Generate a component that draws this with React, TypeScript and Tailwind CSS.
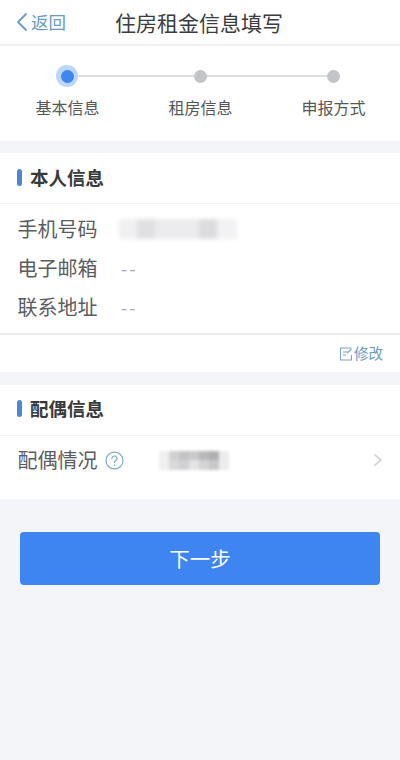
const font = { fontFamily: '"Noto Sans CJK SC", "Liberation Sans", sans-serif' };

function Bar() {
  return <span className="w-[5px] h-[17px] rounded-full bg-[#4f86d3]" />;
}

function Row({ label, value }: { label: string; value: string }) {
  return (
    <div className="h-[39px] pl-[17.5px] flex items-center">
      <span className="w-[103.5px] text-[20px] leading-none text-[#5a5c5f]">{label}</span>
      <span className="text-[18px] leading-none text-[#a6a8ac] tracking-[2px]">{value}</span>
    </div>
  );
}

export default function App() {
  return (
    <div style={font} className="w-[400px] h-[760px] bg-[#f3f5f9] flex flex-col overflow-hidden">
      <header className="h-[46px] shrink-0 bg-white border-b-2 border-[#f0f1f3] flex items-center pl-[15px]">
        <svg width="14" height="20" viewBox="0 0 14 20" fill="none" stroke="#6b9ac4" strokeWidth="1.8" strokeLinecap="round" strokeLinejoin="round">
          <path d="M11 2 L3 10 L11 18" />
        </svg>
        <span className="ml-[2px] w-[36px] text-[17.5px] leading-none text-[#6b9ac4]">返回</span>
        <span className="ml-[48px] text-[21px] leading-none text-[#3a3c3e]">住房租金信息填写</span>
      </header>

      <section className="h-[95px] shrink-0 bg-white flex flex-col">
        <div className="mt-[20px] ml-[56px] h-[20px] flex items-center">
          <span className="w-[22px] h-[22px] shrink-0 rounded-full bg-[#bcd6f8] flex items-center justify-center">
            <span className="w-[13px] h-[13px] rounded-full bg-[#3f86ee]" />
          </span>
          <span className="w-[115.5px] h-[2px] bg-[#dcdde0]" />
          <span className="w-[13px] h-[13px] shrink-0 rounded-full bg-[#c3c4c8]" />
          <span className="w-[120px] h-[2px] bg-[#dcdde0]" />
          <span className="w-[13px] h-[13px] shrink-0 rounded-full bg-[#c3c4c8]" />
        </div>
        <div className="mt-[13px] pl-[1px] grid grid-cols-[133px_133px_133px] text-center text-[16px] leading-none text-[#55575a]">
          <span>基本信息</span>
          <span>租房信息</span>
          <span>申报方式</span>
        </div>
      </section>

      <section className="mt-[12px] shrink-0 bg-white">
        <div className="h-[51px] pb-[1px] pl-[17px] flex items-center gap-[8px] border-b border-[#f1f2f4]">
          <Bar />
          <span className="text-[18.5px] font-bold text-[#38393b] leading-none">本人信息</span>
        </div>
        <div className="relative pt-[5px] h-[131px] border-b-2 border-[#ececee]">
          <Row label="手机号码" value="" />
          <Row label="电子邮箱" value="--" />
          <Row label="联系地址" value="--" />
          <div className="absolute left-[119px] top-[15px] w-[118px] h-[20px] flex blur-[2px]">
            <span className="w-[18px] bg-[#f0f0f2]" />
            <span className="w-[18px] bg-[#e0e0e2]" />
            <span className="w-[44px] bg-[#ececee]" />
            <span className="w-[18px] bg-[#dcdcde]" />
            <span className="w-[20px] bg-[#f2f2f4]" />
          </div>
        </div>
        <div className="h-[37px] flex items-center justify-end pr-[17px] gap-[1px]">
          <svg width="14" height="14" viewBox="0 0 14 14" fill="none" stroke="#7fa3c4" strokeWidth="1.1">
            <path d="M12.5 1 H1.5 V13 H12.5 V8" />
            <path d="M4 5 H9 M4 8 H7 M12.5 2 L8.5 6" />
          </svg>
          <span className="text-[14.5px] leading-none text-[#6b9ac4]">修改</span>
        </div>
      </section>

      <section className="mt-[13px] shrink-0 bg-white pb-[15px]">
        <div className="h-[51px] pb-[3px] pl-[17px] flex items-center gap-[8px] border-b border-[#f1f2f4]">
          <Bar />
          <span className="text-[18.5px] font-bold text-[#38393b] leading-none">配偶信息</span>
        </div>
        <div className="h-[48px] pl-[17.5px] pr-[17px] flex items-center">
          <span className="text-[20px] leading-none text-[#5a5c5f]">配偶情况</span>
          <svg className="ml-[7px]" width="19" height="19" viewBox="0 0 18 18" fill="none" stroke="#7fa8c8" strokeWidth="1.1" strokeLinecap="round">
            <circle cx="9" cy="9" r="8" />
            <path d="M6.6 7.2 A2.4 2.4 0 1 1 9.8 9.4 C9.1 9.7 9 10.2 9 11" />
            <path d="M9 13.2 V13.4" />
          </svg>
          <div className="ml-[35.5px] w-[70px] h-[19px] grid grid-cols-7 grid-rows-2 blur-[1.5px]">
            <span className="bg-[#f0f0f1]" /><span className="bg-[#d0d0d2]" /><span className="bg-[#c4c4c6]" /><span className="bg-[#cacacc]" /><span className="bg-[#b8b8ba]" /><span className="bg-[#b0b0b2]" /><span className="bg-[#ececed]" />
            <span className="bg-[#f0f0f1]" /><span className="bg-[#d8d8da]" /><span className="bg-[#d0d0d2]" /><span className="bg-[#e4e4e5]" /><span className="bg-[#d4d4d6]" /><span className="bg-[#c8c8ca]" /><span className="bg-[#ececed]" />
          </div>
          <svg className="ml-auto" width="10" height="14" viewBox="0 0 10 14" fill="none" stroke="#c8cacd" strokeWidth="1.6" strokeLinecap="round" strokeLinejoin="round">
            <path d="M2 2 L8 7 L2 12" />
          </svg>
        </div>
      </section>

      <button className="mt-[33px] mx-[20px] h-[53px] shrink-0 rounded-[4px] bg-[#3f85f2] text-white text-[20.5px] leading-none">
        下一步
      </button>
    </div>
  );
}
